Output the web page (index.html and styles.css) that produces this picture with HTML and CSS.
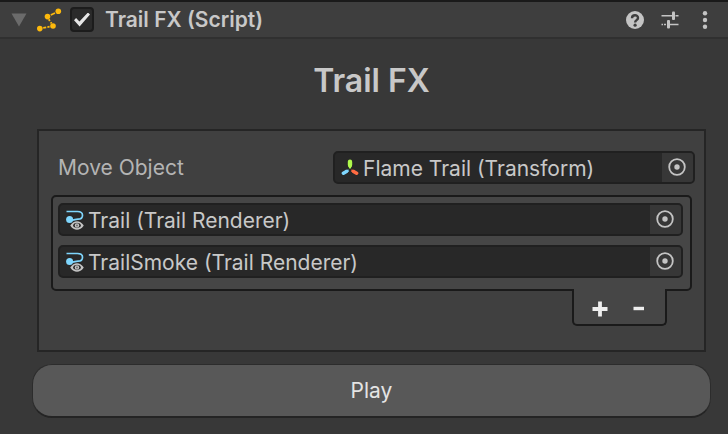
FILE: index.html
```html
<!DOCTYPE html>
<html lang="en">
<head>
<meta charset="utf-8">
<meta name="viewport" content="width=device-width, initial-scale=1">
<title>Trail FX</title>
<link rel="stylesheet" href="styles.css">
</head>
<body>
<svg class="sprites" aria-hidden="true">
  <symbol id="picker" viewBox="0 0 18 18">
    <circle cx="9" cy="9" r="7.8" fill="none" stroke="#c4c4c4" stroke-width="1.8"/>
    <circle cx="9" cy="9" r="2.7" fill="#c4c4c4"/>
  </symbol>
  <symbol id="trail" viewBox="0 0 18 20">
    <path d="M0.5 1.500H11.500C15.500 1.500 16.500 2.800 16.500 5.200C16.500 8 15.500 9.200 12 9.200C9 9.200 8.500 10.300 4 10.200" fill="none" stroke="#7fd6fd" stroke-width="1.700"/>
    <circle cx="3.600" cy="9.500" r="3.500" fill="#7fd6fd"/>
    <path d="M5.200 15.500C7 12.900 8.800 12 11 12S15 12.900 16.800 15.500C15 18.100 13.200 19 11 19S7 18.100 5.200 15.500Z" fill="#282828" stroke="#c4c4c4" stroke-width="1.500"/>
    <path d="M8 12.700C6.800 14.500 6.800 16.500 8 18.300L5 15.500ZM14 12.700C15.200 14.500 15.200 16.500 14 18.300L17 15.500Z" fill="#c4c4c4"/>
    <circle cx="11" cy="15.500" r="2.200" fill="#c4c4c4"/>
    <circle cx="11" cy="15.500" r="0.900" fill="#666"/>
  </symbol>
</svg>
<section class="component">
  <header class="header">
    <button class="foldout" aria-label="Collapse component"><svg viewBox="0 0 16 14" width="16" height="14"><path d="M0.500 0.500H15.500L8 13.500Z" fill="#6b6b6b"/></svg></button>
    <svg class="script-icon" viewBox="0 0 26 24" width="26" height="24" aria-hidden="true">
      <g fill="#fdb90c"><circle cx="21.300" cy="3.300" r="2.800"/><circle cx="10.500" cy="8.600" r="2.800"/><circle cx="16" cy="18" r="2.800"/><circle cx="2.800" cy="20.600" r="2.800"/></g>
      <path d="M13.800 7L18 5M11.800 11.200L12.800 13M13.700 14.200L14.600 15.600M6.200 19.900L9.200 19.400M10.400 19.100L12.600 18.700" fill="none" stroke="#fdb90c" stroke-width="1.800"/>
    </svg>
    <input class="toggle" type="checkbox" checked aria-label="Enable Trail FX">
    <h2 class="name">Trail FX (Script)</h2>
    <div class="tools">
      <button class="tool" aria-label="Help"><svg viewBox="0 0 18 18" width="18" height="18"><circle cx="9" cy="9" r="9" fill="#c4c4c4"/><path d="M6 7.200C6 3.300 12 3.400 12 6.900C12 9.200 9.100 9 9.100 11.500" fill="none" stroke="#3e3e3e" stroke-width="2.400"/><circle cx="9.100" cy="14.200" r="1.600" fill="#3e3e3e"/></svg></button>
      <button class="tool" aria-label="Presets"><svg viewBox="0 0 18 18" width="18" height="18"><path d="M0.500 4.700H11M14.500 4.700H17.500M0.500 13.400H2M3 13.400H5M9 13.400H17.500" fill="none" stroke="#c4c4c4" stroke-width="1.500"/><rect x="11" y="0.500" width="3" height="8.500" rx="1" fill="#c4c4c4"/><rect x="6" y="9" width="3" height="8.500" rx="1" fill="#c4c4c4"/></svg></button>
      <button class="tool" aria-label="More options"><svg viewBox="0 0 18 18" width="18" height="18"><g fill="#c4c4c4"><circle cx="9" cy="2.300" r="2.200"/><circle cx="9" cy="9" r="2.200"/><circle cx="9" cy="15.700" r="2.200"/></g></svg></button>
    </div>
  </header>
  <main class="body">
    <h1 class="title">Trail FX</h1>
    <div class="box">
      <div class="property">
        <label class="label" for="move-object">Move Object</label>
        <div class="field">
          <svg class="field-icon" viewBox="0 0 18 20" aria-hidden="true"><path d="M9 3.800V7" stroke="#b0f94c" stroke-width="4.400" stroke-linecap="round"/><path d="M7 7H11L9.800 10.500H8.200Z" fill="#b0f94c"/><path d="M5 13.700L2.400 15.200" stroke="#7fd6fd" stroke-width="3.600" stroke-linecap="round"/><path d="M4 12L7.600 11.600L7.700 13.200L6 15.300Z" fill="#7fd6fd"/><path d="M13 13.700L15.600 15.200" stroke="#ff6b42" stroke-width="3.600" stroke-linecap="round"/><path d="M14 12L10.400 11.600L10.300 13.200L12 15.300Z" fill="#ff6b42"/></svg>
          <input class="value" id="move-object" type="text" readonly value="Flame Trail (Transform)">
          <button class="pick" aria-label="Select Move Object"><svg width="18" height="18"><use href="#picker"/></svg></button>
        </div>
      </div>
      <div class="list">
        <div class="field">
          <svg class="field-icon" aria-hidden="true"><use href="#trail"/></svg>
          <input class="value" type="text" readonly aria-label="Trail 1" value="Trail (Trail Renderer)">
          <button class="pick" aria-label="Select trail 1"><svg width="18" height="18"><use href="#picker"/></svg></button>
        </div>
        <div class="field">
          <svg class="field-icon" aria-hidden="true"><use href="#trail"/></svg>
          <input class="value" type="text" readonly aria-label="Trail 2" value="TrailSmoke (Trail Renderer)">
          <button class="pick" aria-label="Select trail 2"><svg width="18" height="18"><use href="#picker"/></svg></button>
        </div>
      </div>
      <div class="list-footer">
        <button class="step" aria-label="Add"><svg viewBox="0 0 16 16" width="16" height="16"><path d="M0.500 8H15.500M8 0.500V15.500" stroke="#eee" stroke-width="3.800"/></svg></button>
        <button class="step" aria-label="Remove"><svg viewBox="0 0 16 16" width="16" height="16"><path d="M2.500 7.500H13" stroke="#eee" stroke-width="3.400"/></svg></button>
      </div>
    </div>
    <button class="play">Play</button>
  </main>
</section>
</body>
</html>
```
FILE: styles.css
```css
* {
  box-sizing: border-box;
}

body {
  margin: 0;
  min-height: 100vh;
  background: #383838;
  color: #c8c8c8;
  font: 400 21px/28px Inter, "Liberation Sans", sans-serif;
}

button {
  padding: 0;
  border: 0;
  background: none;
  color: inherit;
  font: inherit;
}

svg {
  display: block;
  flex: none;
}

.sprites {
  position: absolute;
  width: 0;
  height: 0;
}

.header {
  display: flex;
  align-items: center;
  height: 39px;
  padding: 0 14px 0 11px;
  border-top: 2px solid #1a1a1a;
  border-bottom: 2px solid #303030;
  background: #3e3e3e;
}

.script-icon {
  margin: 0 7px 0 10px;
}

.toggle {
  appearance: none;
  display: grid;
  place-items: center;
  width: 24px;
  height: 25px;
  margin: 0;
  border: 2px solid #1c1c1c;
  border-radius: 4px;
  background: #2a2a2a;
}

.toggle:checked::before {
  content: "";
  width: 16px;
  height: 14px;
  background: #e6e6e6;
  clip-path: polygon(0 55%, 13% 40%, 34% 65%, 87% 0, 100% 14%, 35% 100%);
}

.name {
  margin: 0 0 0 11px;
  font-size: 21px;
  font-weight: 600;
}

.tools {
  display: flex;
  gap: 17px;
  margin-left: auto;
}

.body {
  padding: 24px 17px 16px 32px;
}

.title {
  margin: 0 0 30px;
  font-size: 32px;
  line-height: 36px;
  font-weight: 600;
  text-align: center;
}

.box {
  margin: 0 5px 12px;
  padding: 20px 9px 24px 12px;
  border: 2px solid #252525;
  background: #404040;
}

.property {
  display: grid;
  grid-template-columns: 282fr 362fr;
  align-items: center;
  margin-bottom: 11px;
}

.label {
  padding-left: 7px;
  color: #b4b4b4;
}

.field {
  display: flex;
  align-items: center;
  height: 33px;
  padding-left: 6px;
  border: 2px solid #202020;
  border-radius: 5px;
  background: #282828;
  overflow: hidden;
}

.field-icon {
  width: 18px;
  height: 20px;
}

.value {
  flex: 1;
  min-width: 0;
  height: 29px;
  margin-left: 4px;
  padding: 1px 0 0;
  border: 0;
  outline: 0;
  background: none;
  color: inherit;
  font: inherit;
}

.pick {
  display: grid;
  place-items: center;
  align-self: stretch;
  width: 31px;
  padding: 0 1px 1px 0;
  background: #373737;
}

.list {
  display: grid;
  gap: 9px;
  margin-right: 3px;
  padding: 6px 7px 11px 5px;
  border: 2px solid #1a1a1a;
  border-radius: 5px;
  background: #464646;
}

.list-footer {
  display: flex;
  justify-content: center;
  align-items: center;
  gap: 23px;
  width: 95px;
  height: 37px;
  margin: -2px 28px 0 auto;
  padding-top: 4px;
  border: 2px solid #1a1a1a;
  border-top: 0;
  border-radius: 0 0 5px 5px;
  background: #464646;
}

.play {
  display: block;
  width: 100%;
  height: 54px;
  padding-top: 1px;
  border: 1px solid #2c2c2c;
  border-bottom: 2px solid #242424;
  border-radius: 20px;
  background: #585858;
  color: #e4e4e4;
}
```
